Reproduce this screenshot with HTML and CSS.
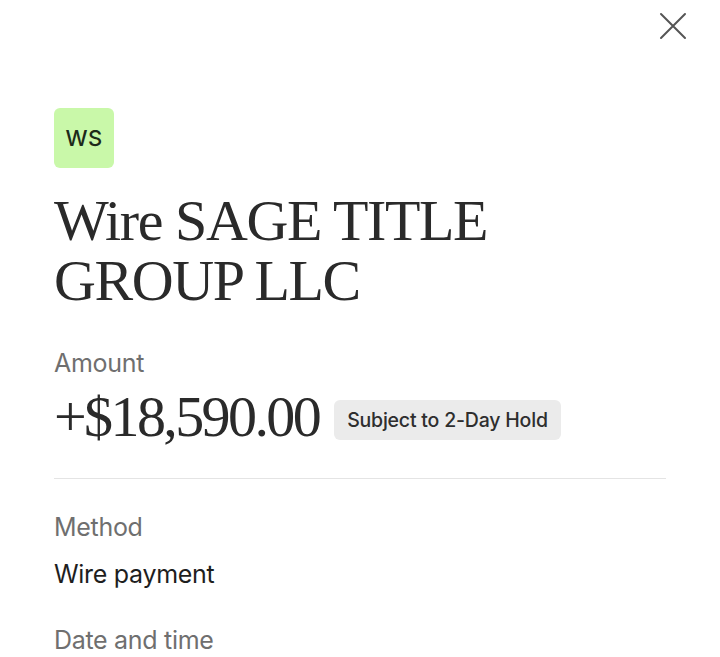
FILE: index.html
```html
<!DOCTYPE html>
<html lang="en">
<head>
<meta charset="utf-8">
<title>Wire SAGE TITLE GROUP LLC</title>
<link rel="stylesheet" href="styles.css">
</head>
<body>
<div class="panel">
  <div class="topbar">
    <button class="close" aria-label="Close">
      <svg width="28" height="28" viewBox="0 0 28 28" fill="none" stroke="#555" stroke-width="2" stroke-linecap="round">
        <path d="M2 2 L26 26 M26 2 L2 26"/>
      </svg>
    </button>
  </div>
  <div class="content">
    <div class="avatar">WS</div>
    <h1 class="title">Wire SAGE TITLE GROUP LLC</h1>
    <div class="label amount-label">Amount</div>
    <div class="amount-row">
      <span class="amount">+$18,590.00</span>
      <span class="tag">Subject to 2-Day Hold</span>
    </div>
    <hr class="divider">
    <div class="label">Method</div>
    <div class="value">Wire payment</div>
    <div class="label date-label">Date and time</div>
  </div>
</div>
</body>
</html>
```
FILE: styles.css
```css
html, body {
  margin: 0;
  padding: 0;
  background: #ffffff;
}
body {
  font-family: Inter, "Noto Sans", "Liberation Sans", sans-serif;
  color: #1f1f1f;
}
.panel {
  width: 720px;
  height: 657px;
  overflow: hidden;
}
.topbar {
  display: flex;
  justify-content: flex-end;
  padding: 12px 33px 0 0;
  height: 40px;
}
.close {
  border: 0;
  background: none;
  padding: 0;
  width: 28px;
  height: 28px;
  display: flex;
}
.content {
  padding: 56px 54px 0 54px;
}
.avatar {
  width: 60px;
  height: 60px;
  border-radius: 6px;
  background: #c9f8a9;
  color: #1d2a1a;
  display: flex;
  align-items: center;
  justify-content: center;
  font-size: 22px;
  font-weight: 500;
  letter-spacing: 0.3px;
}
.title {
  margin: 23px 0 0 0;
  font-family: "Liberation Serif", "DejaVu Serif", serif;
  font-weight: 400;
  font-size: 58px;
  line-height: 60px;
  letter-spacing: -1.4px;
  color: #2a2a2a;
  width: 470px;
}
.label {
  font-size: 25px;
  line-height: 32px;
  color: #6f6f6f;
  letter-spacing: -0.3px;
}
.amount-label {
  margin-top: 36px;
}
.amount-row {
  display: flex;
  align-items: center;
  gap: 15px;
  margin-top: 6px;
}
.amount {
  font-family: "Liberation Serif", "DejaVu Serif", serif;
  font-size: 58px;
  line-height: 64px;
  letter-spacing: -2.6px;
  color: #2a2a2a;
}
.tag {
  background: #ebebeb;
  border-radius: 6px;
  padding: 0 13px;
  height: 40px;
  margin-top: 6px;
  display: inline-flex;
  align-items: center;
  font-size: 19.5px;
  font-weight: 500;
  color: #2e2e2e;
  letter-spacing: -0.2px;
}
.divider {
  border: 0;
  border-top: 1px solid #e4e4e4;
  margin: 29px 0 0 0;
}
.divider + .label {
  margin-top: 32px;
}
.value {
  font-size: 25px;
  line-height: 32px;
  margin-top: 15px;
  color: #1e1e1e;
  letter-spacing: -0.3px;
}
.date-label {
  margin-top: 34px;
}
```
